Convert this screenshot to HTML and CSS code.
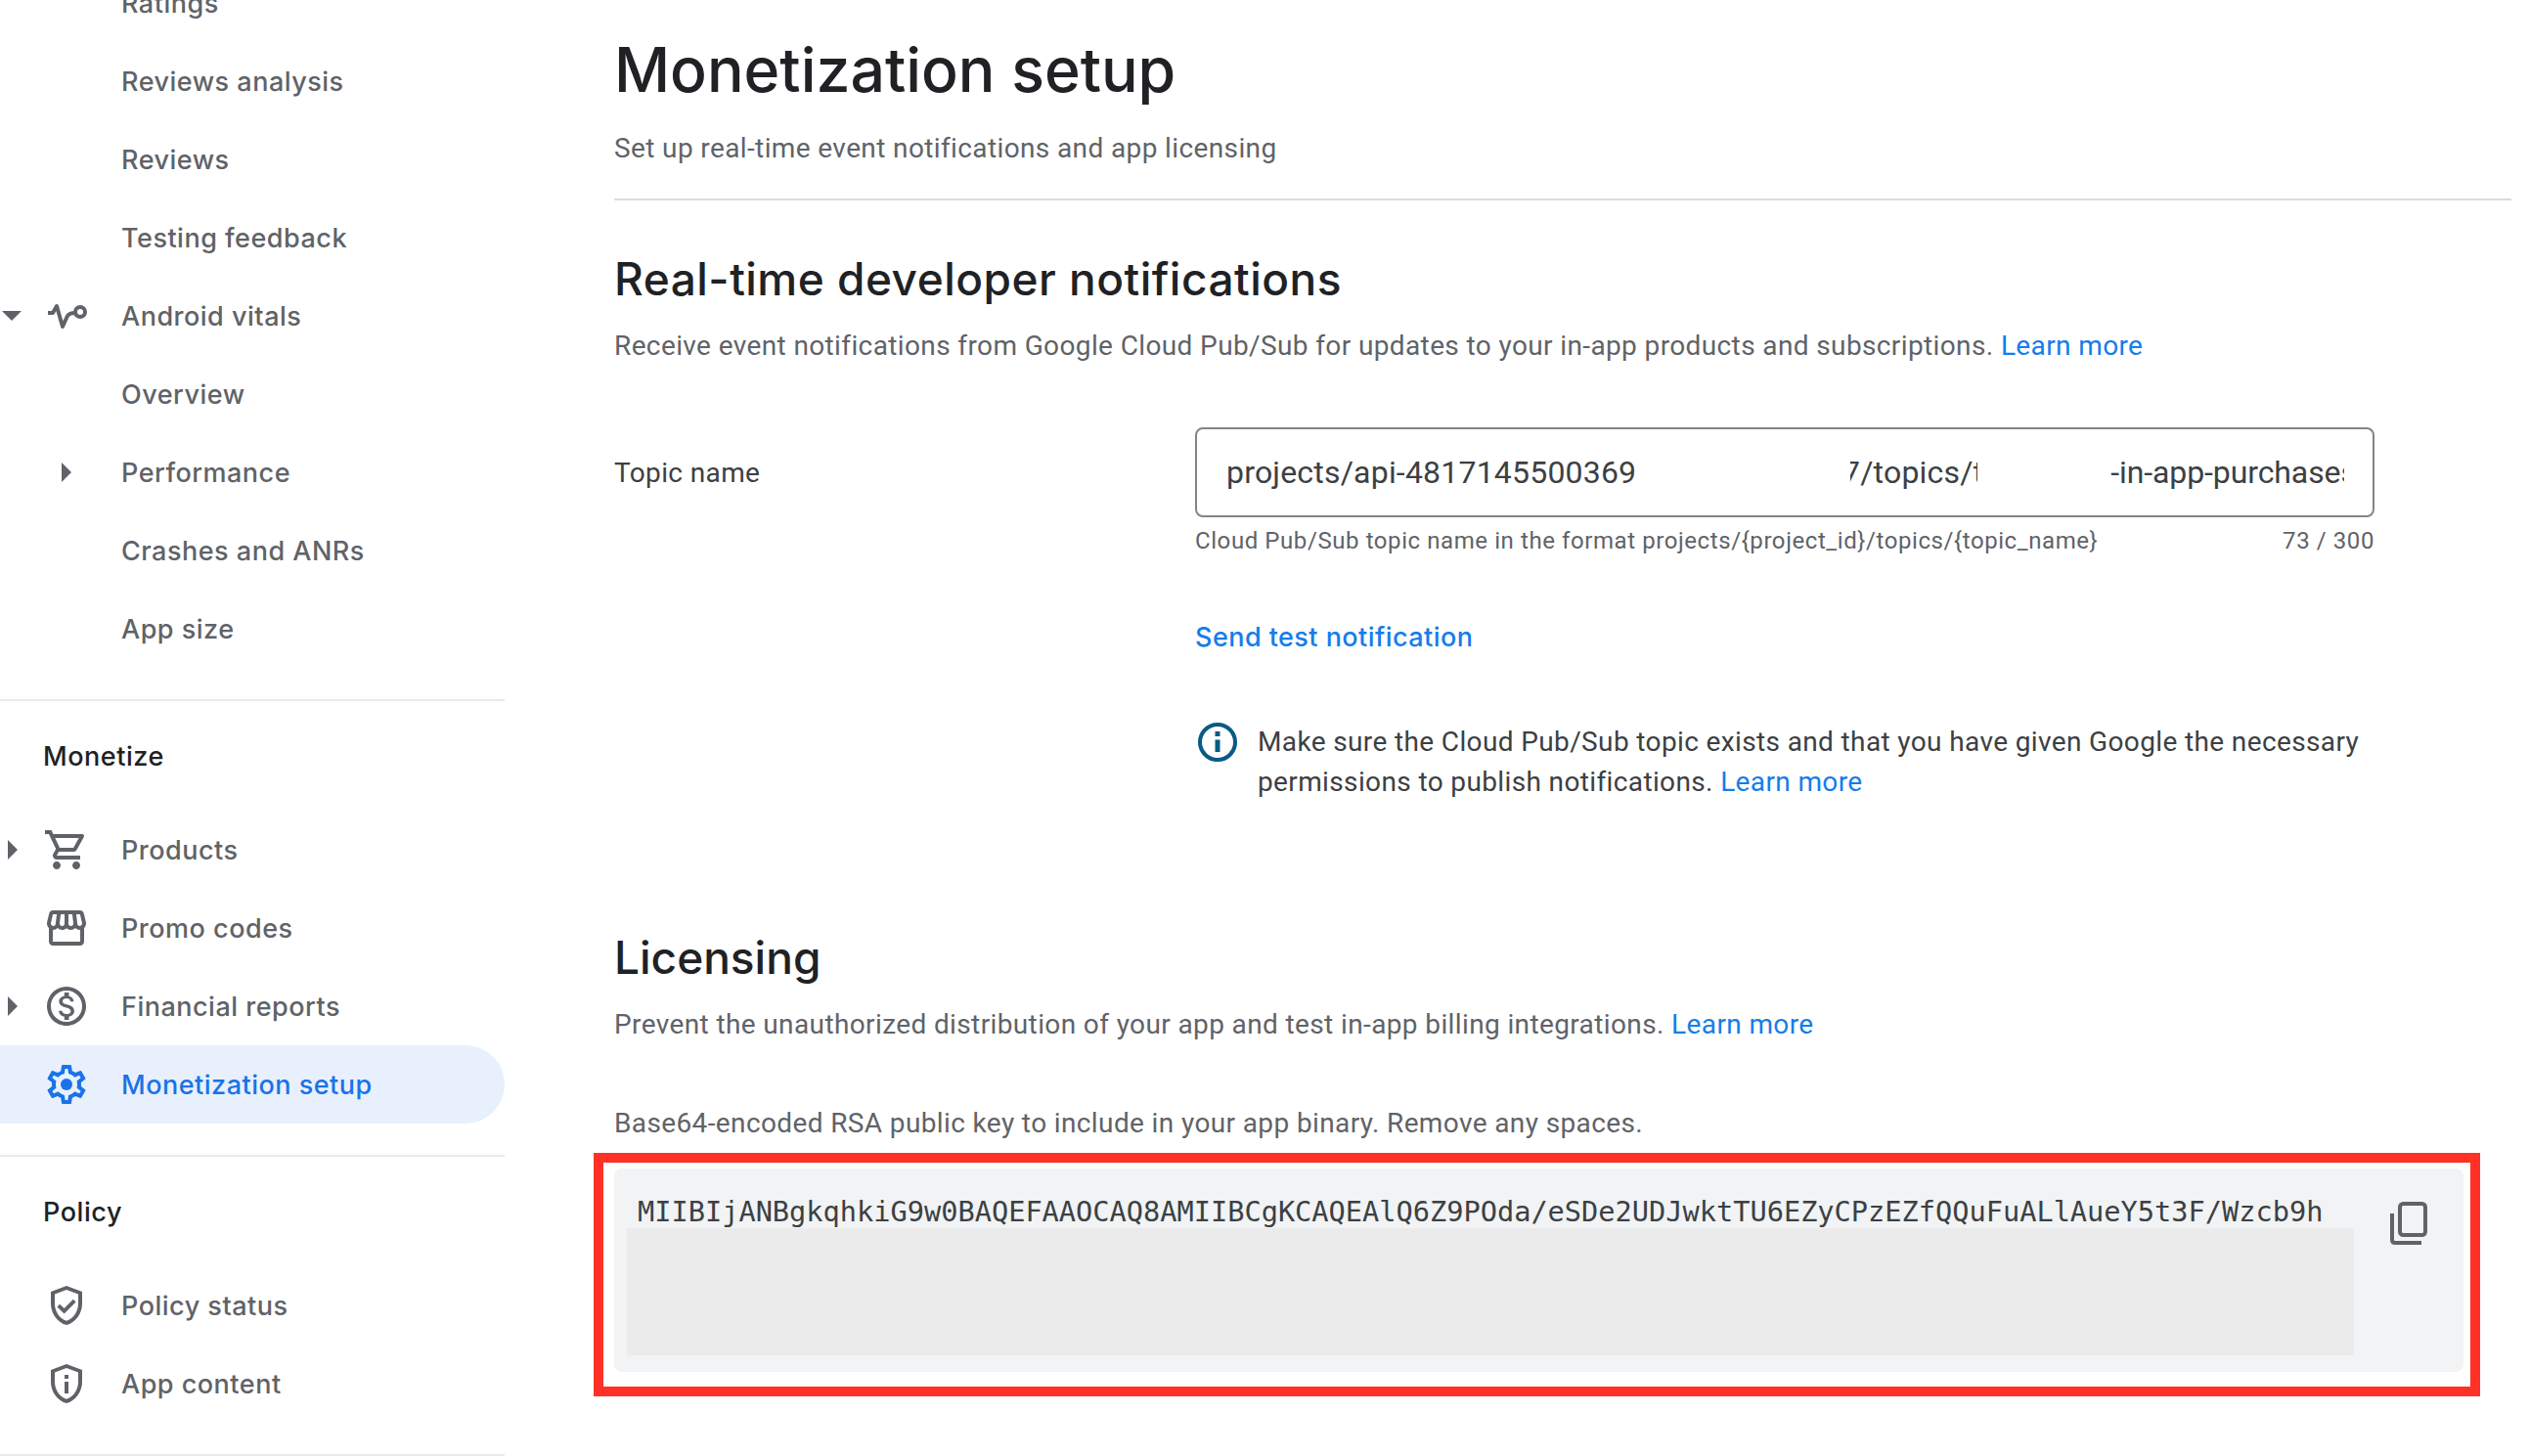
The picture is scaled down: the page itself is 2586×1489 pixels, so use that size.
FILE: index.html
```html
<!DOCTYPE html>
<html lang="en">
<head>
<meta charset="utf-8">
<title>Monetization setup</title>
<link rel="stylesheet" href="styles.css">
</head>
<body>
<div class="page">
  <nav class="sidebar">
    <div class="nav-row"><span class="slot-arrow"></span><span class="slot-icon"></span><span class="nav-label">Ratings</span></div>
    <div class="nav-row"><span class="slot-arrow"></span><span class="slot-icon"></span><span class="nav-label">Reviews analysis</span></div>
    <div class="nav-row"><span class="slot-arrow"></span><span class="slot-icon"></span><span class="nav-label">Reviews</span></div>
    <div class="nav-row"><span class="slot-arrow"></span><span class="slot-icon"></span><span class="nav-label">Testing feedback</span></div>
    <div class="nav-row">
      <span class="slot-arrow"><svg class="arrow-down" viewBox="0 0 20 10"><path d="M0 0h20L10 10z"/></svg></span>
      <span class="slot-icon"><svg class="icon-vitals" viewBox="0 0 44 26"><path class="vital-line" d="M3 10h5l4-7 6 21 5-11q2-3 8-3"/><circle class="vital-dot" cx="36" cy="9" r="5"/></svg></span>
      <span class="nav-label">Android vitals</span>
    </div>
    <div class="nav-row"><span class="slot-arrow"></span><span class="slot-icon"></span><span class="nav-label">Overview</span></div>
    <div class="nav-row">
      <span class="slot-arrow"></span>
      <span class="slot-icon"><svg class="arrow-right" viewBox="0 0 10 20"><path d="M0 0l10 10L0 20z"/></svg></span>
      <span class="nav-label">Performance</span>
    </div>
    <div class="nav-row"><span class="slot-arrow"></span><span class="slot-icon"></span><span class="nav-label">Crashes and ANRs</span></div>
    <div class="nav-row"><span class="slot-arrow"></span><span class="slot-icon"></span><span class="nav-label">App size</span></div>

    <div class="nav-divider nav-divider-first"></div>
    <div class="nav-section">Monetize</div>
    <div class="nav-row">
      <span class="slot-arrow slot-arrow-shift"><svg class="arrow-right" viewBox="0 0 10 20"><path d="M0 0l10 10L0 20z"/></svg></span>
      <span class="slot-icon"><svg class="icon" viewBox="0 0 24 24"><path d="M15.55 13c.75 0 1.41-.41 1.75-1.03l3.58-6.49c.37-.66-.11-1.48-.87-1.48H5.21l-.94-2H1v2h2l3.6 7.59-1.35 2.44C4.52 15.37 5.48 17 7 17h12v-2H7l1.1-2h7.45zM6.16 6h12.15l-2.76 5H8.53L6.16 6zM7 18c-1.1 0-1.99.9-1.99 2S5.9 22 7 22s2-.9 2-2-.9-2-2-2zm10 0c-1.1 0-1.99.9-1.99 2s.89 2 1.99 2 2-.9 2-2-.9-2-2-2z"/></svg></span>
      <span class="nav-label">Products</span>
    </div>
    <div class="nav-row">
      <span class="slot-arrow"></span>
      <span class="slot-icon"><svg class="icon" viewBox="0 0 24 24"><path d="M21.9 8.89l-1.05-4.37c-.22-.9-1-1.52-1.91-1.52H5.05c-.9 0-1.69.63-1.9 1.52L2.1 8.89c-.24 1.02-.02 2.06.62 2.88.08.11.19.19.28.29V19c0 1.1.9 2 2 2h14c1.1 0 2-.9 2-2v-6.94c.09-.09.2-.18.28-.28.64-.82.87-1.87.62-2.89zm-2.99-3.9l1.05 4.37c.1.42.01.84-.25 1.17-.14.18-.44.47-.94.47-.61 0-1.14-.49-1.21-1.14L16.98 5l1.93-.01zM13 5h1.96l.54 4.52c.05.39-.07.78-.33 1.07-.22.26-.54.41-.95.41-.67 0-1.22-.59-1.22-1.31V5zM8.49 9.52L9.04 5H11v4.69c0 .72-.55 1.31-1.29 1.31-.34 0-.65-.15-.89-.41-.25-.29-.37-.68-.33-1.07zm-4.45-.16L5.05 5h1.97l-.58 4.86c-.08.65-.6 1.14-1.21 1.14-.49 0-.8-.29-.93-.47-.27-.32-.36-.75-.26-1.17zM5 19v-6.03c.08.01.15.03.23.03.87 0 1.66-.36 2.24-.95.6.6 1.4.95 2.31.95.87 0 1.65-.36 2.23-.93.59.57 1.39.93 2.29.93.84 0 1.64-.35 2.24-.95.58.59 1.37.95 2.24.95.08 0 .15-.02.23-.03V19H5z"/></svg></span>
      <span class="nav-label">Promo codes</span>
    </div>
    <div class="nav-row">
      <span class="slot-arrow slot-arrow-shift"><svg class="arrow-right" viewBox="0 0 10 20"><path d="M0 0l10 10L0 20z"/></svg></span>
      <span class="slot-icon"><svg class="icon" viewBox="0 0 24 24"><path d="M12 2C6.48 2 2 6.48 2 12s4.48 10 10 10 10-4.48 10-10S17.52 2 12 2zm0 18c-4.41 0-8-3.59-8-8s3.59-8 8-8 8 3.59 8 8-3.59 8-8 8zm.31-8.86c-1.77-.45-2.34-.94-2.34-1.67 0-.84.79-1.43 2.1-1.43 1.38 0 1.9.66 1.94 1.64h1.71c-.05-1.34-.87-2.57-2.49-2.97V5H10.9v1.69c-1.51.32-2.72 1.3-2.72 2.81 0 1.79 1.49 2.69 3.66 3.21 1.95.46 2.34 1.15 2.34 1.87 0 .53-.39 1.39-2.1 1.39-1.6 0-2.23-.72-2.32-1.64H8.04c.1 1.7 1.36 2.66 2.86 2.97V19h2.34v-1.67c1.52-.29 2.72-1.16 2.73-2.77-.01-2.2-1.9-2.96-3.66-3.42z"/></svg></span>
      <span class="nav-label">Financial reports</span>
    </div>
    <div class="nav-row nav-row-active">
      <span class="slot-arrow"></span>
      <span class="slot-icon"><svg class="icon" viewBox="0 0 24 24"><path d="M19.43 12.98c.04-.32.07-.64.07-.98 0-.34-.03-.66-.07-.98l2.11-1.65c.19-.15.24-.42.12-.64l-2-3.46c-.09-.16-.26-.25-.44-.25-.06 0-.12.01-.17.03l-2.49 1c-.52-.4-1.08-.73-1.69-.98l-.38-2.65C14.46 2.18 14.25 2 14 2h-4c-.25 0-.46.18-.49.42l-.38 2.65c-.61.25-1.17.59-1.69.98l-2.49-1c-.06-.02-.12-.03-.18-.03-.17 0-.34.09-.43.25l-2 3.46c-.13.22-.07.49.12.64l2.11 1.65c-.04.32-.07.65-.07.98 0 .33.03.66.07.98l-2.11 1.65c-.19.15-.24.42-.12.64l2 3.46c.09.16.26.25.44.25.06 0 .12-.01.17-.03l2.49-1c.52.4 1.08.73 1.69.98l.38 2.65c.03.24.24.42.49.42h4c.25 0 .46-.18.49-.42l.38-2.65c.61-.25 1.17-.59 1.69-.98l2.49 1c.06.02.12.03.18.03.17 0 .34-.09.43-.25l2-3.46c.12-.22.07-.49-.12-.64l-2.11-1.65zm-1.98-1.71c.04.31.05.52.05.73 0 .21-.02.43-.05.73l-.14 1.13.89.7 1.08.84-.7 1.21-1.27-.51-1.04-.42-.9.68c-.43.32-.84.56-1.25.73l-1.06.43-.16 1.13-.2 1.35h-1.4l-.19-1.35-.16-1.13-1.06-.43c-.43-.18-.83-.41-1.23-.71l-.91-.7-1.06.43-1.27.51-.7-1.21 1.08-.84.89-.7-.14-1.13c-.03-.31-.05-.54-.05-.74s.02-.43.05-.73l.14-1.13-.89-.7-1.08-.84.7-1.21 1.27.51 1.04.42.9-.68c.43-.32.84-.56 1.25-.73l1.06-.43.16-1.13.2-1.35h1.39l.19 1.35.16 1.13 1.06.43c.43.18.83.41 1.23.71l.91.7 1.06-.43 1.27-.51.7 1.21-1.07.85-.89.7.14 1.13z"/><circle cx="12" cy="12" r="3"/></svg></span>
      <span class="nav-label">Monetization setup</span>
    </div>

    <div class="nav-divider nav-divider-second"></div>
    <div class="nav-section">Policy</div>
    <div class="nav-row">
      <span class="slot-arrow"></span>
      <span class="slot-icon"><svg class="icon" viewBox="0 0 24 24"><path d="M12 2 4 5v6.09c0 5.05 3.41 9.76 8 10.91 4.59-1.15 8-5.86 8-10.91V5l-8-3zm6 9.09c0 4-2.55 7.7-6 8.83-3.45-1.13-6-4.82-6-8.83V6.31l6-2.25 6 2.25v4.78z"/><path d="M8.6 11.4l-1.4 1.4 3.6 3.5 6-6-1.4-1.4-4.6 4.6z"/></svg></span>
      <span class="nav-label">Policy status</span>
    </div>
    <div class="nav-row">
      <span class="slot-arrow"></span>
      <span class="slot-icon"><svg class="icon" viewBox="0 0 24 24"><path d="M12 2 4 5v6.09c0 5.05 3.41 9.76 8 10.91 4.59-1.15 8-5.86 8-10.91V5l-8-3zm6 9.09c0 4-2.55 7.7-6 8.83-3.45-1.13-6-4.82-6-8.83V6.31l6-2.25 6 2.25v4.78z"/><path d="M11 11h2v6h-2zM11 7.5h2v2h-2z"/></svg></span>
      <span class="nav-label">App content</span>
    </div>
    <div class="nav-divider nav-divider-third"></div>
  </nav>

  <main class="main">
    <h1 class="page-title">Monetization setup</h1>
    <p class="body-text page-sub">Set up real-time event notifications and app licensing</p>
    <div class="main-divider"></div>

    <h2 class="section-title section-title-first">Real-time developer notifications</h2>
    <p class="body-text section-desc">Receive event notifications from Google Cloud Pub/Sub for updates to your in-app products and subscriptions. <a class="link">Learn more</a></p>

    <div class="form-grid">
      <div class="field-label body-text">Topic name</div>
      <div class="field-input">
        <span class="input-part">projects/api-4817145500369</span>
        <span class="input-part input-mid"><span>7/topics/t</span></span>
        <span class="input-part input-end">-in-app-purchases</span>
      </div>
      <div class="field-foot">
        <span>Cloud Pub/Sub topic name in the format projects/{project_id}/topics/{topic_name}</span>
        <span>73 / 300</span>
      </div>
      <a class="send-link">Send test notification</a>
      <div class="info-row">
        <svg class="info-icon" viewBox="0 0 40 40"><circle cx="20" cy="20" r="18" class="info-ring"/><path class="info-mark" d="M17.5 17.5h5V30h-5zM17.5 9h5v5h-5z"/></svg>
        <p class="info-text">Make sure the Cloud Pub/Sub topic exists and that you have given Google the necessary permissions to publish notifications. <a class="link">Learn more</a></p>
      </div>
    </div>

    <h2 class="section-title section-title-second">Licensing</h2>
    <p class="body-text section-desc">Prevent the unauthorized distribution of your app and test in-app billing integrations. <a class="link">Learn more</a></p>
    <p class="body-text key-label">Base64-encoded RSA public key to include in your app binary. Remove any spaces.</p>

    <div class="key-frame">
      <div class="key-box">
        <div class="key-col">
          <div class="key-text">MIIBIjANBgkqhkiG9w0BAQEFAAOCAQ8AMIIBCgKCAQEAlQ6Z9POda/eSDe2UDJwktTU6EZyCPzEZfQQuFuALlAueY5t3F/Wzcb9h</div>
          <div class="key-mask"></div>
        </div>
        <svg class="copy-icon" viewBox="0 0 48 48"><rect x="14" y="4" width="26" height="32" rx="3.5"/><path d="M6 14v27q0 3 3 3h27"/></svg>
      </div>
    </div>
  </main>
</div>
</body>
</html>
```

FILE: styles.css
```css
* { box-sizing: border-box; }
html, body { margin: 0; padding: 0; background: #fff; }
body { font-family: Roboto, "Liberation Sans", sans-serif; color: #3c4043; }
.page { display: flex; width: 2586px; height: 1489px; overflow: hidden; }

.sidebar { flex: 0 0 516px; width: 516px; margin-top: -37px; display: flex; flex-direction: column; }
.nav-row { display: flex; align-items: center; flex: 0 0 80px; height: 80px; color: #5f6368; fill: #5f6368; }
.slot-arrow { flex: 0 0 44px; width: 44px; display: flex; justify-content: flex-start; align-items: center; }
.slot-arrow-shift { padding-left: 8px; }
.slot-icon { flex: 0 0 48px; width: 48px; margin-right: 32px; display: flex; justify-content: center; align-items: center; }
.icon { width: 48px; height: 48px; display: block; }
.icon-vitals { width: 44px; height: 26px; display: block; }
.arrow-down { width: 20px; height: 10px; margin-left: 2px; display: block; }
.arrow-right { width: 10px; height: 20px; display: block; }
.vital-line { fill: none; stroke: #5f6368; stroke-width: 4; stroke-linecap: butt; stroke-linejoin: round; }
.vital-dot { fill: none; stroke: #5f6368; stroke-width: 4; }
.nav-label { font-family: Inter, Roboto, sans-serif; font-size: 27px; font-weight: 500; letter-spacing: 0.5px; white-space: nowrap; }
.nav-row-active { background: #e8f0fe; color: #1a73e8; fill: #1a73e8; border-radius: 0 40px 40px 0; }
.nav-divider { flex: 0 0 2px; height: 2px; background: #e8eaed; }
.nav-divider-first { margin-top: 32px; }
.nav-divider-second { margin-top: 32px; }
.nav-divider-third { margin-top: 32px; }
.nav-section { padding-left: 44px; margin: 35px 0 33px; height: 44px; line-height: 44px; font-family: Inter, Roboto, sans-serif; font-size: 27px; font-weight: 500; letter-spacing: 0.55px; color: #202124; }

.main { flex: 1 1 auto; padding: 31px 18px 0 112px; min-width: 0; }
.page-title { margin: 0; font-family: Inter, Roboto, sans-serif; font-size: 62.6px; line-height: 80px; font-weight: 450; color: #202124; }
.body-text { margin: 0; padding-top: 1px; height: 40px; font-size: 28px; line-height: 40px; letter-spacing: 0.38px; color: #5f6368; }
.page-sub { margin-top: 20px; }
.main-divider { height: 2px; margin-top: 32px; background: #dadce0; }
.section-title { margin: 0; font-family: Inter, Roboto, sans-serif; font-size: 46px; line-height: 64px; font-weight: 500; letter-spacing: 0.5px; color: #202124; }
.section-title-first { margin-top: 48px; }
.section-title-second { margin-top: 127px; letter-spacing: 0; }
.section-desc { margin-top: 16px; }
.link { color: #147deb; }

.form-grid { display: grid; grid-template-columns: 594px 1206px; margin-top: 64px; }
.field-label { align-self: center; color: #3c4043; }
.field-input { height: 92px; border: 2px solid #80868b; border-radius: 8px; padding-left: 30px; display: flex; align-items: center; font-size: 32px; color: #3c4043; letter-spacing: 0.2px; overflow: hidden; }
.input-part { white-space: nowrap; overflow: hidden; flex: none; }
.input-mid { width: 130px; margin-left: 219px; display: flex; justify-content: flex-end; }
.input-mid span { flex: none; margin-right: -6px; }
.input-end { width: 239px; margin-left: 136px; letter-spacing: -0.1px; }
.field-foot { grid-column: 2; margin-top: 8px; display: flex; justify-content: space-between; font-size: 24px; line-height: 32px; letter-spacing: 0.58px; color: #5f6368; }
.send-link { grid-column: 2; margin-top: 63px; margin-bottom: -1px; font-family: Inter, Roboto, sans-serif; font-size: 27px; line-height: 40px; font-weight: 500; letter-spacing: 0.45px; color: #147deb; }
.info-row { grid-column: 2; margin-top: 68px; display: flex; padding-left: 3px; }
.info-icon { flex: 0 0 40px; width: 40px; height: 40px; margin-right: 21px; }
.info-ring { fill: none; stroke: #0b5a86; stroke-width: 4; }
.info-mark { fill: #0b5a86; }
.info-text { margin: 0; font-size: 28px; line-height: 40.5px; letter-spacing: 0.37px; color: #3c4043; }

.key-label { margin-top: 61px; }
.key-frame { margin: 11px 23px 0 -21px; width: 1929px; height: 249px; border: 10px solid #ff3126; padding: 6px 7px 15px 11px; }
.key-box { height: 208px; background: #f1f3f4; border-radius: 8px; padding: 27px 0 17px 13px; display: flex; align-items: flex-start; }
.key-col { flex: 0 0 1766px; width: 1766px; }
.key-text { height: 34px; line-height: 34px; padding-left: 11px; font-family: "DejaVu Sans Mono", monospace; font-size: 28.63px; color: #3c4043; white-space: nowrap; }
.key-mask { height: 130px; background: #ebebeb; }
.copy-icon { flex: none; width: 48px; height: 48px; margin: 5px 0 0 33px; fill: none; stroke: #5f6368; stroke-width: 4; }
```
